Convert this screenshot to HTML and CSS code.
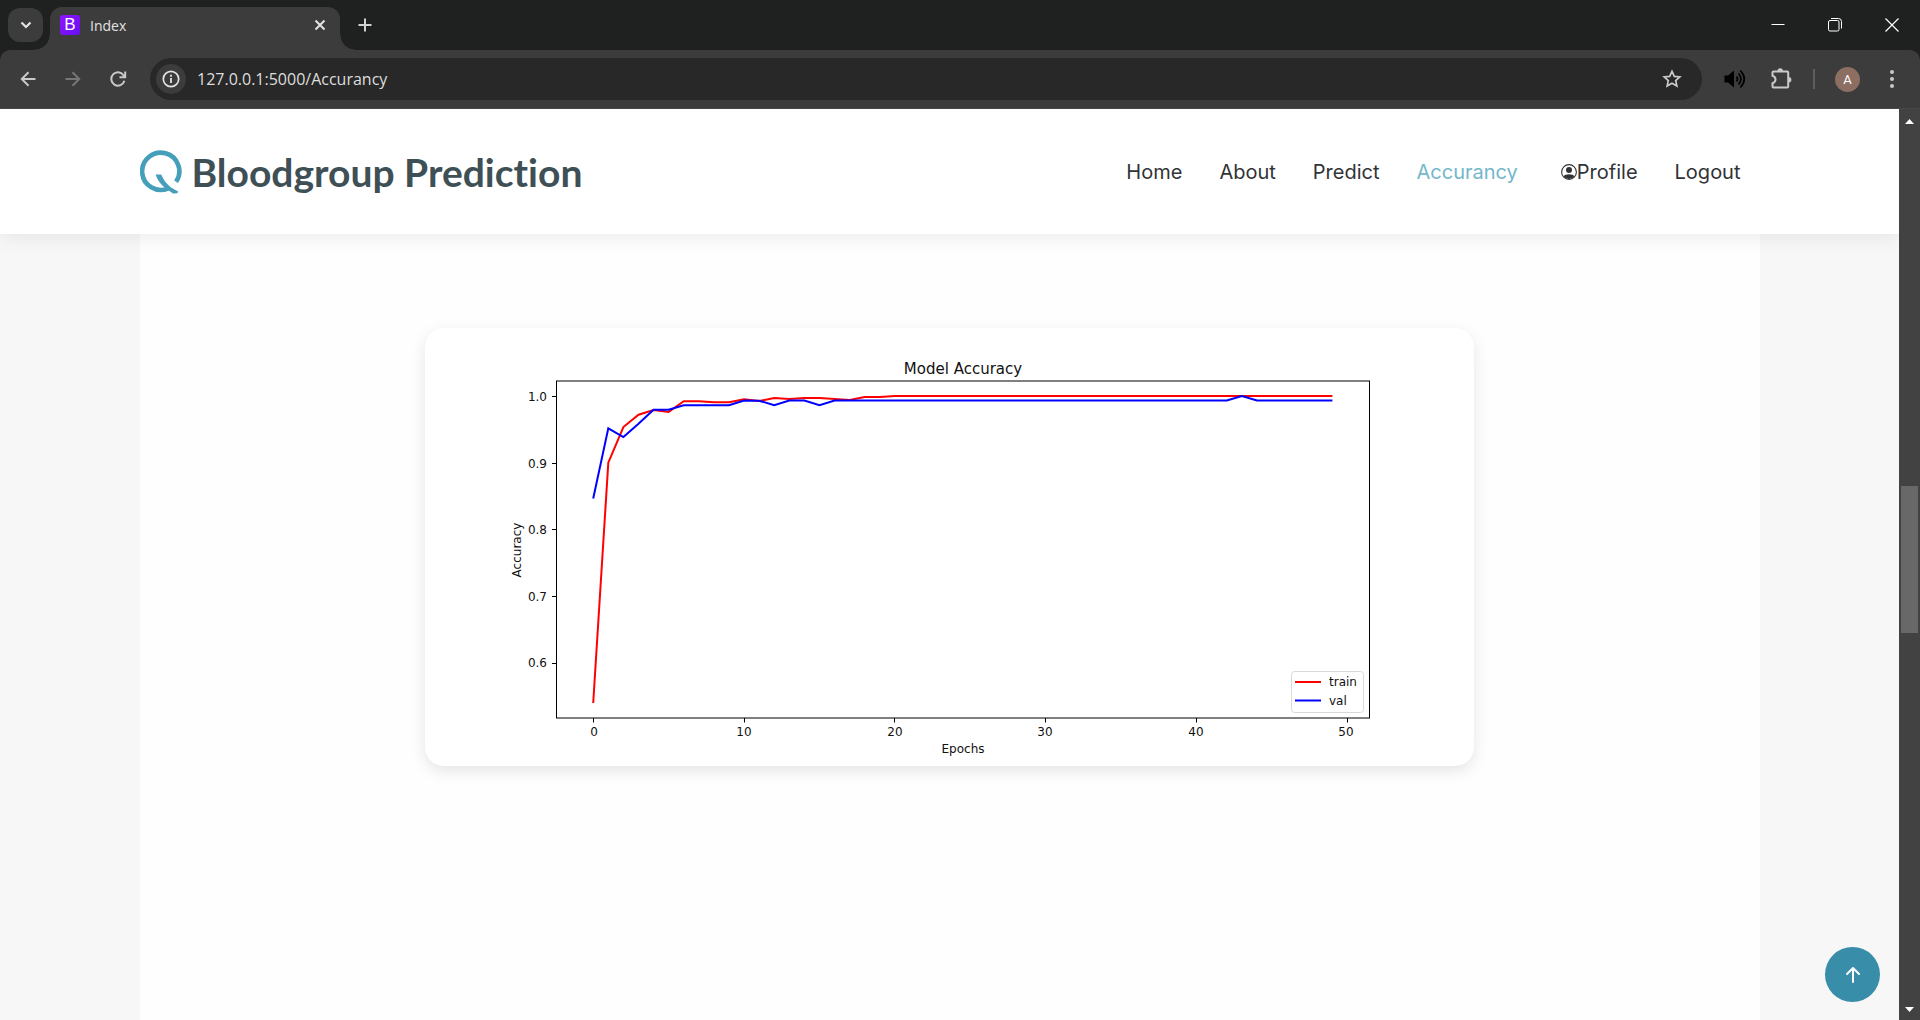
FILE: index.html
```html
<!DOCTYPE html>
<html lang="en">
<head>
<meta charset="utf-8">
<meta name="viewport" content="width=device-width, initial-scale=1">
<title>Index</title>
<link rel="stylesheet" href="styles.css">
</head>
<body>
<div class="browser">
  <div class="tabstrip">
    <button class="tab-search" aria-label="Search tabs"><svg width="12" height="8" viewBox="0 0 12 8"><path d="M1.5 1.5 6 6l4.500-4.500" fill="none" stroke="#e3e3e3" stroke-width="2.200"/></svg></button>
    <div class="tab">
      <span class="favicon">B</span>
      <span class="tab-title">Index</span>
      <button class="icon-btn tab-close" aria-label="Close tab"><svg width="12" height="12" viewBox="0 0 12 12"><path d="M1.500 1.500l9 9M10.500 1.500l-9 9" stroke="#e3e3e3" stroke-width="2"/></svg></button>
    </div>
    <button class="icon-btn new-tab" aria-label="New tab"><svg width="14" height="14" viewBox="0 0 14 14"><path d="M7 .5v13M.5 7h13" stroke="#d0d0d0" stroke-width="2"/></svg></button>
    <div class="window-controls">
      <button class="icon-btn" aria-label="Minimize"><svg width="14" height="14" viewBox="0 0 14 14"><path d="M.5 6.500h13" stroke="#fff"/></svg></button>
      <button class="icon-btn" aria-label="Restore"><svg width="14" height="14" viewBox="0 0 14 14" fill="none" stroke="#fff"><rect x=".5" y="2.500" width="10.500" height="10.500" rx="1.500"/><path d="M3 .5h7.500a3 3 0 0 1 3 3V10.500"/></svg></button>
      <button class="icon-btn" aria-label="Close"><svg width="14" height="14" viewBox="0 0 14 14"><path d="M.5.5l13 13M13.500.5l-13 13" stroke="#fff" stroke-width="1.200"/></svg></button>
    </div>
  </div>

  <div class="toolbar">
    <button class="icon-btn" aria-label="Back"><svg width="16" height="16" viewBox="0 0 16 16" fill="none" stroke="#c9c9c9" stroke-width="2"><path d="M15.500 8H2M8.500 1.200 1.800 8l6.700 6.800"/></svg></button>
    <button class="icon-btn" aria-label="Forward"><svg width="16" height="16" viewBox="0 0 16 16" fill="none" stroke="#767676" stroke-width="2"><path d="M.5 8H14M7.500 1.200 14.200 8l-6.700 6.800"/></svg></button>
    <button class="icon-btn" aria-label="Reload"><svg width="18" height="18" viewBox="0 0 18 18" fill="none" stroke="#c9c9c9" stroke-width="2"><path d="M15.400 10.800A6.700 6.700 0 1 1 14.500 5.200L16 7M16.200 1.500v5.700h-5.700"/></svg></button>
    <div class="omnibox">
      <button class="site-info" aria-label="Site information"><svg width="18" height="18" viewBox="0 0 18 18"><circle cx="9" cy="9" r="7.700" fill="none" stroke="#e3e3e3" stroke-width="1.700"/><path d="M9 8v5M9 4.800v1.900" stroke="#e3e3e3" stroke-width="1.800"/></svg></button>
      <input class="url" type="text" aria-label="Address" value="127.0.0.1:5000/Accurancy">
      <button class="icon-btn" aria-label="Bookmark"><svg width="20" height="20" viewBox="0 0 20 20"><path d="M10 2.300l2.300 5.100 5.500.5-4.100 3.700 1.200 5.500L10 14.300l-4.900 2.800 1.200-5.500L2.200 7.900l5.500-.5z" fill="none" stroke="#c9c9c9" stroke-width="1.700"/></svg></button>
    </div>
    <button class="icon-btn" aria-label="Volume"><svg width="22" height="20" viewBox="0 0 22 20"><path d="M.5 6.500H4L10 1.500v17l-6-5H.5z"/><path d="M12.500 7.500q2 2.500 0 5M14.500 4.500q5 5.500 0 11M16.300 1.500q8 8.500 0 17" fill="none" stroke="#000" stroke-width="1.700"/></svg></button>
    <button class="icon-btn" aria-label="Extensions"><svg width="22" height="22" viewBox="0 0 22 22"><path d="M2.500 4.500q0-1 1-1h13.700q1 0 1 1v14q0 1-1 1H3.500q-1 0-1-1v-3.300q3-1 3-3.700t-3-3.700z" fill="none" stroke="#c9c9c9" stroke-width="2"/><path d="M7.500 3a2.700 2.700 0 0 1 5.400 0zM18.700 9a2.700 2.700 0 0 1 0 5.400z" fill="#c9c9c9"/></svg></button>
    <span class="divider"></span>
    <button class="avatar" aria-label="Account">A</button>
    <button class="icon-btn menu-btn" aria-label="Menu"><svg width="6" height="20" viewBox="0 0 6 20" fill="#c9c9c9"><circle cx="3" cy="3" r="2"/><circle cx="3" cy="10" r="2"/><circle cx="3" cy="17" r="2"/></svg></button>
  </div>

  <div class="viewport">
    <div class="page">
      <header class="site-header">
        <div class="container header-row">
          <a class="brand" href="#">
            <svg width="44" height="48" viewBox="2 1 44 48"><path d="M38.100 34.800A18.600 18.600 0 1 0 30.300 41.300" fill="none" stroke="#459fba" stroke-width="4.600"/><path d="M17.500 27.500h5.700c2.500 6 5.600 9.500 9.800 13l7.500 4.200q-1.500 2.300-5.500 1.800L28 41.500c-5-3.500-8.200-8-10.500-14z" fill="#459fba"/></svg>
            <span class="brand-name">Bloodgroup Prediction</span>
          </a>
          <nav class="nav">
            <a href="#">Home</a>
            <a href="#">About</a>
            <a href="#">Predict</a>
            <a href="#" class="active">Accurancy</a>
            <a href="#" class="profile"><svg width="16" height="16" viewBox="0 0 16 16"><circle cx="8" cy="8" r="7.400" fill="none" stroke="currentColor" stroke-width="1.100"/><circle cx="8" cy="6" r="3" fill="currentColor"/><path d="M2.500 12.300C4 9.500 12 9.500 13.500 12.300A7 7 0 0 1 2.500 12.300z" fill="currentColor"/></svg>Profile</a>
            <a href="#">Logout</a>
          </nav>
        </div>
      </header>
      <main class="container content">
        <figure class="card">
          <svg class="chart" viewBox="0 0 1049 438" role="img" aria-label="Model Accuracy">
            <g class="axis">
              <path d="M131 53H945M131 390H945M131.500 53V390M944.500 53V390"/>
              <path d="M127 68.500h4M127 135.500h4M127 201.500h4M127 268.500h4M127 335.500h4"/>
              <path d="M168.500 390v4.500M319.500 390v4.500M469.500 390v4.500M620.500 390v4.500M771.500 390v4.500M922.500 390v4.500"/>
            </g>
            <text class="chart-title" x="538" y="46">Model Accuracy</text>
            <g class="ticks y-ticks">
              <text x="122" y="73">1.0</text><text x="122" y="140">0.9</text><text x="122" y="206">0.8</text><text x="122" y="273">0.7</text><text x="122" y="339">0.6</text>
            </g>
            <g class="ticks">
              <text x="169" y="408">0</text><text x="319" y="408">10</text><text x="470" y="408">20</text><text x="620" y="408">30</text><text x="771" y="408">40</text><text x="921" y="408">50</text>
              <text x="538" y="425">Epochs</text>
              <text transform="translate(96 222) rotate(-90)">Accuracy</text>
            </g>
            <polyline class="line train" points="168.200,375 183.300,134.700 198.400,99 213.500,86.700 228.500,82 243.600,84 258.700,73.300 273.800,73.300 288.900,74.300 304,74.300 319.100,71.300 334.100,73 349.200,70 364.300,71 379.400,70 394.500,70 409.600,71 424.700,72 439.700,69 454.800,69 469.900,68 907.400,68"/>
            <polyline class="line val" points="168.200,170.500 183.300,100.300 198.400,109 213.500,95.700 228.500,81.700 243.600,81.700 258.700,77.300 304,77.300 319.100,72.500 334.100,72.700 349.200,77.200 364.300,72.500 379.400,72.500 394.500,77.200 409.600,72.500 801.800,72.500 816.900,68 832,72.500 907.400,72.500"/>
            <rect class="legend" x="866.500" y="343.500" width="72" height="41" rx="3"/>
            <path class="line train" d="M870 354h26"/>
            <path class="line val" d="M870 372.500h26"/>
            <g class="ticks legend-text"><text x="904" y="358">train</text><text x="904" y="377">val</text></g>
          </svg>
        </figure>
      </main>
      <a class="scroll-top" href="#" aria-label="Back to top"><svg width="16" height="18" viewBox="0 0 16 18" fill="none" stroke="#fff" stroke-width="2" stroke-linecap="round" stroke-linejoin="round"><path d="M8 16V2M2 8l6-6 6 6"/></svg></a>
    </div>
    <div class="scrollbar">
      <svg width="9" height="5" viewBox="0 0 9 5"><path d="M0 5 4.500 0 9 5z" fill="#fff"/></svg>
      <div class="track"><div class="thumb"></div></div>
      <svg width="9" height="5" viewBox="0 0 9 5"><path d="M0 0 4.500 5 9 0z" fill="#fff"/></svg>
    </div>
  </div>
</div>
</body>
</html>
```
FILE: styles.css
```css
* { box-sizing: border-box; }
body { margin: 0; font-family: "Inter", sans-serif; }
button { border: 0; padding: 0; background: none; font: inherit; color: inherit; }
a { color: inherit; text-decoration: none; }
svg { display: block; flex: none; }

.browser { display: flex; flex-direction: column; height: 100vh; overflow: hidden; background: #1f2120; }
.icon-btn { display: flex; align-items: center; justify-content: center; width: 46px; height: 42px; flex: none; }

/* Tab strip */
.tabstrip { display: flex; align-items: center; height: 50px; padding-left: 8px; font: 14px "Open Sans", sans-serif; }
.tab-search { display: flex; align-items: center; justify-content: center; width: 35px; height: 34px; border-radius: 12px; background: #3c3c3c; }
.tab { position: relative; display: flex; align-items: center; gap: 10px; width: 290px; height: 43px; margin: 7px 0 0 7px; padding: 0 0 7px 10px; border-radius: 12px 12px 0 0; background: #3c3c3c; color: #e3e3e3; }
.tab::before, .tab::after { content: ""; position: absolute; bottom: 0; width: 15px; height: 15px; }
.tab::before { right: 100%; background: radial-gradient(circle at 0 0, transparent 14px, #3c3c3c 15px); }
.tab::after { left: 100%; background: radial-gradient(circle at 100% 0, transparent 14px, #3c3c3c 15px); }
.favicon { width: 20px; height: 20px; border-radius: 3px; background: linear-gradient(135deg, #9013fe, #6610f2); color: #fff; font: 17px/20px "Liberation Sans", sans-serif; text-align: center; }
.tab-close { width: 40px; height: 36px; margin-left: auto; }
.new-tab { width: 50px; }
.window-controls { display: flex; margin-left: auto; }
.window-controls .icon-btn { width: 57px; }

/* Toolbar */
.toolbar { display: flex; align-items: center; height: 59px; padding: 0 5px; border-radius: 10px 10px 0 0; border-bottom: 1px solid #4a4648; background: #3c3c3c; }
.toolbar > .icon-btn:nth-child(-n+3) { width: 45px; }
.omnibox { display: flex; flex: 1; align-items: center; height: 42px; margin: 0 10px; padding: 0 7px 0 6px; border-radius: 21px; background: #282828; }
.site-info { display: flex; align-items: center; justify-content: center; width: 30px; height: 30px; border-radius: 50%; background: #3c3c3c; }
.url { flex: 1; min-width: 0; margin-left: 11px; padding: 0; border: 0; outline: 0; background: none; color: #dedede; font: 16px "Open Sans", sans-serif; }
.divider { width: 2px; height: 20px; margin-left: 9px; background: #5e5e5e; }
.avatar { width: 25px; height: 25px; margin-left: 20px; border-radius: 50%; background: #8d6e63; color: #fff; font: 13px/25px "Roboto", sans-serif; }
.menu-btn { margin-left: 9px; }

/* Page */
.viewport { display: flex; flex: 1; min-height: 0; }
.page { position: relative; display: flex; flex: 1; flex-direction: column; min-width: 0; overflow: hidden; background: #f7f7f7; }
.container { width: 100%; max-width: 1620px; margin: 0 auto; }
.site-header { z-index: 1; padding: 39px 0 38px; background: #fff; box-shadow: 0 0 22px rgba(0, 0, 0, .1); }
.header-row { display: flex; align-items: center; justify-content: space-between; }
.brand { display: flex; align-items: center; gap: 8px; color: #3e5055; }
.brand-name { font: 700 39px/48px "Lato", sans-serif; font-variant-ligatures: none; }
.nav { display: flex; gap: 37px; padding-right: 19px; color: #313336; font-size: 20px; line-height: 24px; }
.nav .active { color: #74b6cc; }
.profile { display: flex; align-items: center; margin-left: 6px; }
.content { flex: 1; padding-top: 94px; background: #fefefe; }
.card { max-width: 1049px; margin: 0 auto; border-radius: 19px; background: #fff; box-shadow: 0 5px 15px rgba(0, 0, 0, .1); }
.scroll-top { position: absolute; right: 19px; bottom: 18px; display: flex; align-items: center; justify-content: center; width: 55px; height: 55px; border-radius: 50%; background: #388da8; }

/* Chart */
.chart { width: 100%; font-family: "DejaVu Sans", sans-serif; fill: #111; }
.axis { fill: none; stroke: #000; stroke-width: 1px; }
.chart-title { font-size: 15px; text-anchor: middle; }
.ticks { font-size: 12px; text-anchor: middle; }
.y-ticks { text-anchor: end; }
.legend-text { text-anchor: start; }
.line { fill: none; stroke-width: 2px; }
.train { stroke: #f00; }
.val { stroke: #00f; }
.legend { fill: #fff; stroke: #d9d9d9; }

/* Scrollbar */
.scrollbar { display: flex; flex-direction: column; align-items: center; width: 21px; padding: 10px 0 8px; background: #424242; }
.track { display: grid; flex: 1; grid-template-rows: 362fr 147fr 374fr; width: 17px; }
.thumb { grid-row: 2; background: #686868; }
```
